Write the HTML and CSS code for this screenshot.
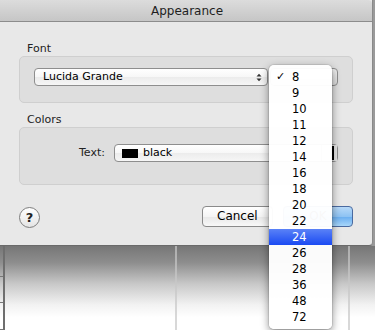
FILE: index.html
```html
<!DOCTYPE html>
<html>
<head>
<meta charset="utf-8">
<link rel="stylesheet" href="styles.css">
</head>
<body>
<div class="screen">
  <div class="dialog">
    <div class="titlebar">Appearance</div>
    <div class="content">
      <div class="label">Font</div>
      <div class="group group-font">
        <div class="popup popup-font">
          <span>Lucida Grande</span>
          <span class="arrows">
            <svg width="6" height="9" viewBox="0 0 6 9"><path d="M0.5 3.5 L3 0.8 L5.5 3.5 Z M0.5 5.5 L3 8.2 L5.5 5.5 Z" fill="#333"/></svg>
          </span>
        </div>
        <div class="popup popup-size"></div>
      </div>
      <div class="label">Colors</div>
      <div class="group group-colors">
        <span class="text-label">Text:</span>
        <div class="popup popup-color">
          <span class="swatch"></span>
          <span>black</span>
          <span class="well"><span class="well-bar"></span></span>
        </div>
      </div>
      <div class="buttons">
        <div class="help">?</div>
        <div class="spacer"></div>
        <div class="btn btn-cancel">Cancel</div>
        <div class="btn btn-ok">OK</div>
      </div>
    </div>
  </div>
  <div class="desk">
    <div class="col col-a"><div class="row"></div><div class="row"></div><div class="row"></div></div>
    <div class="col col-b"></div>
    <div class="col col-c"></div>
    <div class="col col-d"></div>
  </div>
  <div class="menu">
    <div class="item"><span class="check">✓</span>8</div>
    <div class="item">9</div>
    <div class="item">10</div>
    <div class="item">11</div>
    <div class="item">12</div>
    <div class="item">14</div>
    <div class="item">16</div>
    <div class="item">18</div>
    <div class="item">20</div>
    <div class="item">22</div>
    <div class="item selected">24</div>
    <div class="item">26</div>
    <div class="item">28</div>
    <div class="item">36</div>
    <div class="item">48</div>
    <div class="item">72</div>
  </div>
</div>
</body>
</html>
```

FILE: styles.css
```css
html, body {
  margin: 0;
  padding: 0;
}
body {
  font-family: "DejaVu Sans", "Liberation Sans", sans-serif;
  font-size: 11px;
  color: #000;
  background: #fff;
}
.screen {
  position: relative;
  width: 375px;
  height: 330px;
  overflow: hidden;
  background: #9a9a9a;
}
.dialog {
  width: 373px;
  height: 246px;
  box-sizing: border-box;
  background: #e8e8e8;
  border-right: 1px solid #8a8a8a;
  border-bottom: 1px solid #6a6a6a;
  border-bottom-right-radius: 4px;
  display: flex;
  flex-direction: column;
}
.titlebar {
  height: 21px;
  border-bottom: 1px solid #8c8c8c;
  background: linear-gradient(#dcdcdc, #c6c6c6);
  border-top-right-radius: 4px;
  font-size: 12px;
  line-height: 22px;
  text-align: center;
  color: #1e1e1e;
  padding-left: 2px;
}
.content {
  padding: 19px 19px 0 19px;
  display: flex;
  flex-direction: column;
}
.label {
  height: 15px;
  line-height: 15px;
  padding-left: 8px;
  color: #222;
}
.group {
  box-sizing: border-box;
  border: 1px solid #cfcfcf;
  border-radius: 5px;
  background: #dedede;
  display: flex;
  align-items: flex-start;
}
.group-font {
  height: 47px;
  padding: 11px 0 0 14px;
  margin-bottom: 9px;
}
.group-colors {
  height: 58px;
  padding: 16px 0 0 59px;
}
.popup {
  box-sizing: border-box;
  height: 18px;
  border: 1px solid #8e8e8e;
  border-radius: 4px;
  background: linear-gradient(#ffffff, #f7f7f7 50%, #ececec 52%, #f6f6f6);
  display: flex;
  align-items: center;
  line-height: 16px;
}
.popup-font {
  width: 234px;
  padding: 0 0 0 8px;
  justify-content: space-between;
}
.arrows {
  display: flex;
  width: 16px;
  justify-content: center;
  padding-top: 1px;
}
.popup-size {
  width: 68px;
  margin-left: 2px;
  background: linear-gradient(#f0f0f0, #dcdcdc);
}
.text-label {
  line-height: 18px;
  width: 28px;
  margin-right: 7px;
  color: #222;
}
.popup-color {
  width: 224px;
  padding-left: 7px;
}
.swatch {
  width: 16px;
  height: 9px;
  background: #000;
  margin-right: 5px;
}
.well {
  margin-left: auto;
  width: 16px;
  height: 16px;
  box-sizing: border-box;
  border-left: 1px solid #bdbdbd;
  background: #e4e4e4;
  display: flex;
  justify-content: flex-end;
  padding-right: 3px;
  align-items: center;
}
.well-bar {
  width: 3px;
  height: 14px;
  background: #000;
}
.buttons {
  margin-top: 21px;
  height: 21px;
  display: flex;
  align-items: center;
}
.help {
  box-sizing: border-box;
  width: 21px;
  height: 21px;
  margin-top: 2px;
  border-radius: 50%;
  border: 1px solid #7e7e7e;
  background: linear-gradient(#ffffff, #e4e4e4);
  font-weight: bold;
  font-size: 13px;
  line-height: 19px;
  text-align: center;
  color: #222;
}
.spacer {
  flex: 1;
}
.btn {
  box-sizing: border-box;
  height: 21px;
  border-radius: 4px;
  font-size: 12px;
  line-height: 19px;
  text-align: center;
}
.btn-cancel {
  width: 71px;
  border: 1px solid #8a8a8a;
  background: linear-gradient(#ffffff, #f4f4f4 50%, #e8e8e8 52%, #f8f8f8);
  text-align: left;
  padding-left: 14px;
}
.btn-ok {
  width: 70px;
  margin-left: 10px;
  border: 1px solid #4a6aa0;
  background: linear-gradient(#b7d9f8, #8ec3f3 50%, #6aaef0 52%, #a8d6f9);
  color: #222;
}
.desk {
  height: 84px;
  display: flex;
  background: linear-gradient(#767676, #8e8e8e 20%, #c8c8c8 45%, #f2f2f2 70%, #ffffff 85%);
}
.col {
  box-sizing: border-box;
  border-right: 2px solid rgba(200, 200, 200, 0.7);
}
.col-a {
  width: 5px;
  border-right: 2px solid #6e6e6e;
  display: flex;
  flex-direction: column;
  padding-top: 4px;
}
.col-a .row {
  height: 33px;
  border-bottom: 1px solid #777;
}
.col-b {
  width: 172px;
}
.col-c {
  width: 173px;
}
.col-d {
  flex: 1;
  border-right: none;
}
.menu {
  position: absolute;
  left: 269px;
  top: 65px;
  width: 63px;
  height: 264px;
  box-sizing: border-box;
  padding: 4px 0;
  border-radius: 5px;
  background: rgba(255, 255, 255, 0.97);
  box-shadow: 0 3px 9px rgba(0, 0, 0, 0.45), 0 0 0 1px rgba(0, 0, 0, 0.08);
}
.item {
  position: relative;
  height: 16px;
  line-height: 16px;
  padding-left: 23px;
  font-size: 11.5px;
  color: #000;
}
.check {
  position: absolute;
  left: 7px;
  top: 0;
  font-size: 11px;
  font-weight: bold;
}
.item.selected {
  background: linear-gradient(#5a82f7, #1a4af2);
  color: #fff;
}
```
